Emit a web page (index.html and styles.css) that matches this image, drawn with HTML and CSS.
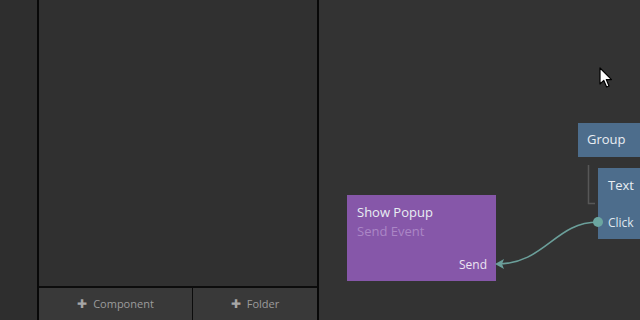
FILE: index.html
```html
<!DOCTYPE html>
<html lang="en">
<head>
    <meta charset="UTF-8">
    <title>Node Editor</title>
    <link rel="stylesheet" href="styles.css">
</head>
<body>
    <div class="app">
        <!-- Left strip -->
        <div class="strip"></div>

        <!-- Components panel -->
        <div class="panel">
            <div class="panel-list"></div>
            <div class="panel-actions">
                <button class="action"><span class="plus">✚</span>Component</button>
                <button class="action"><span class="plus">✚</span>Folder</button>
            </div>
        </div>

        <!-- Node canvas -->
        <div class="canvas">
            <svg class="wires" width="321" height="320" viewBox="0 0 321 320">
                <path d="M269.5 165 V203.5 H276" fill="none" stroke="#575757" stroke-width="1.5"/>
                <path d="M279 222 C236 222 226 264 178 264" fill="none" stroke="#6b9f9a" stroke-width="1.6"/>
                <path d="M176 264 L185 259 L183 264 L185 269 Z" fill="#6b9f9a"/>
            </svg>

            <div class="node node-popup">
                <div class="node-title">Show Popup</div>
                <div class="node-sub">Send Event</div>
                <div class="node-port">Send</div>
            </div>

            <div class="node node-group">
                <div class="node-title">Group</div>
            </div>

            <div class="node node-text">
                <div class="node-title">Text</div>
                <div class="node-port-left">Click</div>
            </div>
            <div class="dot"></div>

            <svg class="cursor" width="14" height="22" viewBox="0 0 14 22">
                <path d="M1 1 V17 L4.8 13.4 L7.6 20 L10 19 L7.3 12.6 L12.5 12.6 Z" fill="#fff" stroke="#000" stroke-width="1.2" stroke-linejoin="round"/>
            </svg>
        </div>
    </div>
</body>
</html>
```

FILE: styles.css
```css
/* Base */
body {
    margin: 0;
    font-family: "Open Sans", "Noto Sans", sans-serif;
    background-color: #333;
    overflow: hidden;
}

.app {
    display: flex;
    width: 640px;
    height: 320px;
}

/* Left strip */
.strip {
    width: 37px;
    background-color: #2e2e2e;
}

/* Panel */
.panel {
    width: 278px;
    border-left: 2px solid #080808;
    border-right: 2px solid #080808;
    background-color: #303030;
    display: flex;
    flex-direction: column;
}

.panel-list {
    flex: 1;
}

.panel-actions {
    display: flex;
    height: 32px;
    border-top: 2px solid #0c0c0c;
    background-color: #393939;
}

.action {
    display: flex;
    align-items: center;
    justify-content: center;
    gap: 6px;
    padding: 0 0 2px;
    border: none;
    background: none;
    color: #9c9c9c;
    font-family: "Open Sans", "Noto Sans", sans-serif;
    font-size: 11px;
}

.action:first-child {
    width: 154px;
    border-right: 1px solid #0c0c0c;
}

.action:last-child {
    flex: 1;
}

.plus {
    font-size: 12px;
    color: #a6a6a6;
}

/* Canvas */
.canvas {
    flex: 1;
    position: relative;
    background-color: #333;
    overflow: hidden;
}

.wires {
    position: absolute;
    top: 0;
    left: 0;
    z-index: 1;
}

.node {
    position: absolute;
    box-sizing: border-box;
    color: #e9eef3;
    font-size: 13px;
}

.node-title {
    line-height: 18px;
}

.node-popup {
    left: 28px;
    top: 195px;
    width: 149px;
    height: 86px;
    padding: 8px 10px;
    background-color: #8657a9;
}

.node-sub {
    margin-top: 1px;
    color: #ab86c6;
    line-height: 18px;
}

.node-port {
    position: absolute;
    right: 9px;
    bottom: 8px;
    font-size: 12px;
    color: #ece4f2;
}

.node-group {
    left: 259px;
    top: 123px;
    width: 70px;
    height: 34px;
    padding: 7px 9px;
    background-color: #4d6d8c;
}

.node-text {
    left: 279px;
    top: 168px;
    width: 50px;
    height: 71px;
    padding: 8px 10px;
    background-color: #4d6d8c;
}

.node-port-left {
    margin-top: 20px;
    font-size: 12px;
    color: #dfe7ee;
}

.dot {
    position: absolute;
    left: 274px;
    top: 217px;
    width: 10px;
    height: 10px;
    border-radius: 50%;
    background-color: #6ba6a0;
    z-index: 2;
}

.cursor {
    position: absolute;
    left: 280px;
    top: 67px;
}
```
